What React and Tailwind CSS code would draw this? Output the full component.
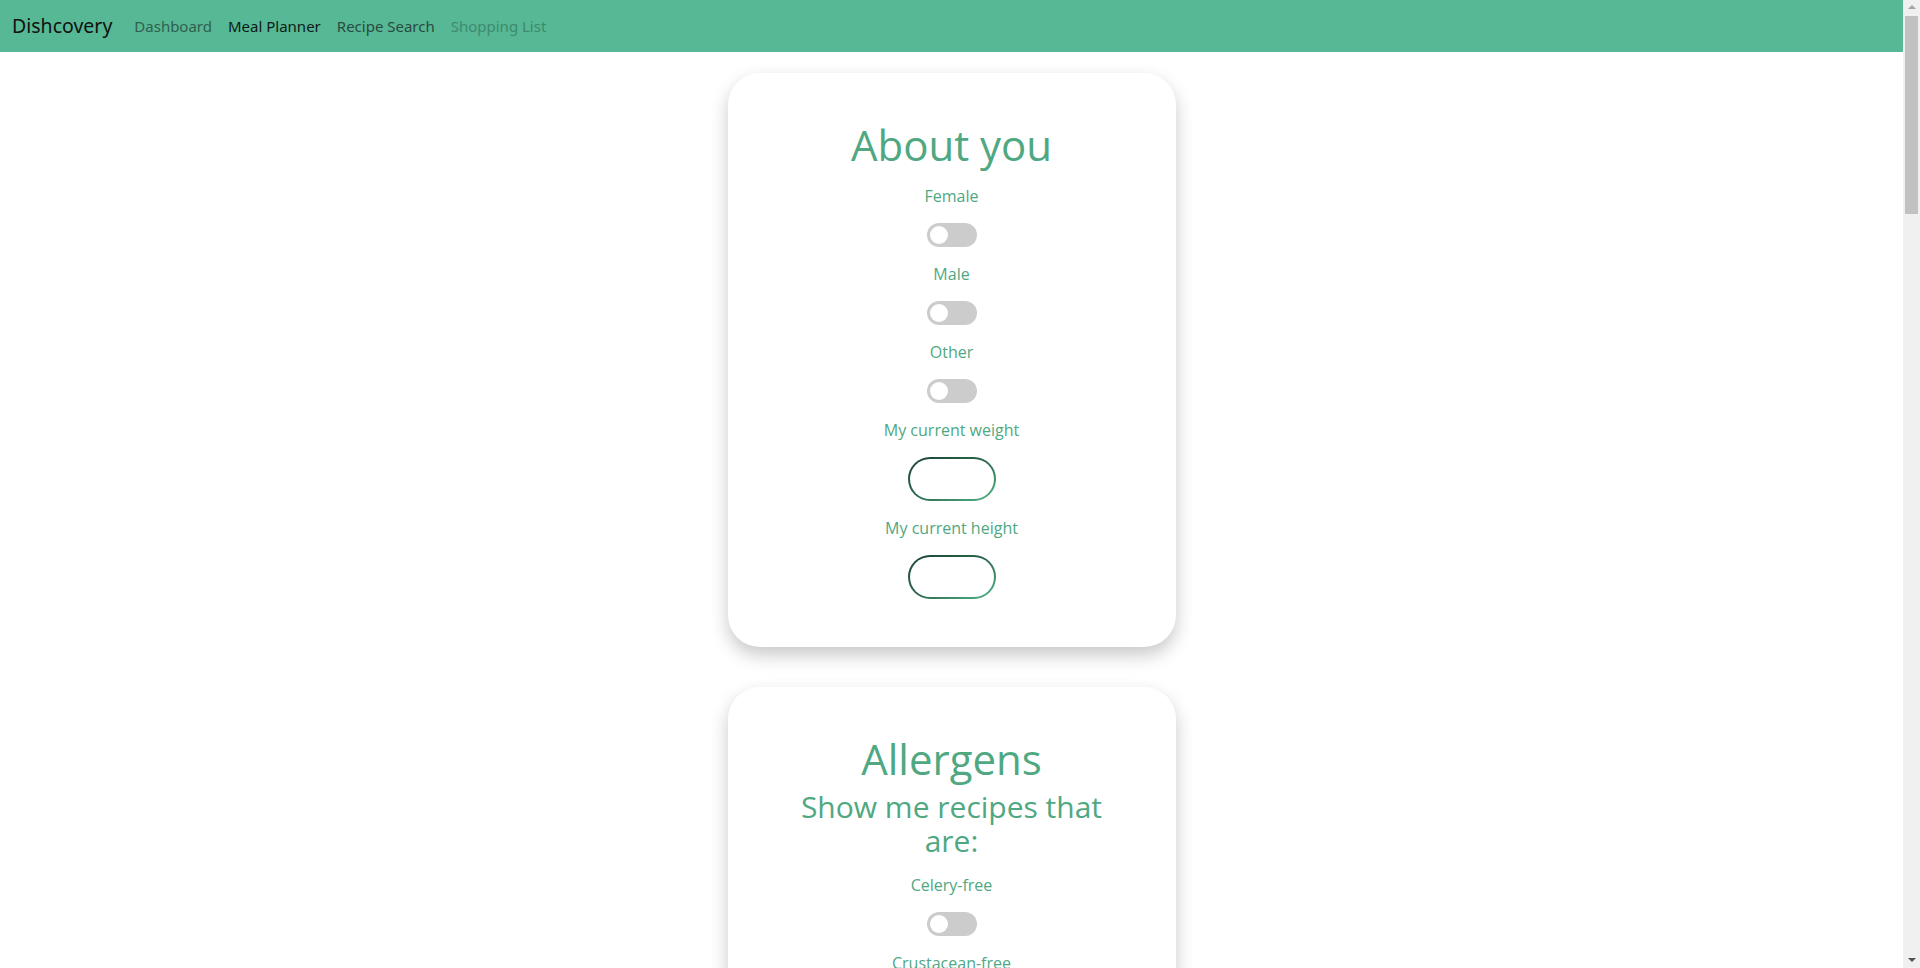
import { useState } from "react";

const cardFont = { fontFamily: '"Open Sans", "Noto Sans", sans-serif' };

function Toggle({ on, onChange }) {
  return (
    <button
      onClick={onChange}
      className={`relative h-6 w-[50px] rounded-full transition ${on ? "bg-[#52b788]" : "bg-[#cccccc]"}`}
    >
      <span
        className={`absolute top-[3px] h-[18px] w-[18px] rounded-full bg-white transition-all ${on ? "left-[29px]" : "left-[3px]"}`}
      />
    </button>
  );
}

function Field({ label, children }) {
  return (
    <>
      <label className="text-[16px] leading-6 text-[#4fa882]">{label}</label>
      {children}
    </>
  );
}

function PillInput() {
  return (
    <div className="rounded-full bg-gradient-to-br from-[#1b4332] via-[#2d6a4f] to-[#52b788] p-[2px]">
      <input className="block h-10 w-[84px] rounded-full bg-white px-3 text-center outline-none" />
    </div>
  );
}

function Card({ children }) {
  return (
    <div
      className="flex w-[448px] shrink-0 flex-col items-center gap-[15px] rounded-[32px] bg-white px-12 py-12 text-center shadow-[0_8px_18px_rgba(0,0,0,0.22)]"
      style={cardFont}
    >
      {children}
    </div>
  );
}

function Scrollbar() {
  return (
    <div className="flex h-full w-[17px] shrink-0 flex-col items-center bg-[#f0f0f0]">
      <div className="mt-[5px] h-0 w-0 border-x-[4px] border-b-[4px] border-x-transparent border-b-[#a3a3a3]" />
      <div className="mt-[7px] h-[198px] w-[13px] bg-[#c1c1c1]" />
      <div className="flex-1" />
      <div className="mb-[6px] h-0 w-0 border-x-[4px] border-t-[4px] border-x-transparent border-t-[#505050]" />
    </div>
  );
}

export default function App() {
  const [sex, setSex] = useState({ female: false, male: false, other: false });
  const [allergens, setAllergens] = useState({ celery: false, crustacean: false });

  return (
    <div className="flex h-screen overflow-hidden bg-white">
      <div className="flex min-w-0 flex-1 flex-col overflow-hidden">
        <nav
          className="flex h-[52px] shrink-0 items-center bg-[#56b894] px-3"
          style={{ fontFamily: '"Noto Sans", "Open Sans", sans-serif' }}
        >
          <span className="mr-[22px] text-[19.5px] text-[#111]">Dishcovery</span>
          <div className="flex gap-4 text-[15px]">
            <a className="text-[#30604e]">Dashboard</a>
            <a className="text-[#0d1a15]">Meal Planner</a>
            <a className="text-[#2b4a3f]">Recipe Search</a>
            <a className="text-[#3f8a6e]">Shopping List</a>
          </div>
        </nav>

        <main className="flex flex-col items-center gap-10 pt-[21px] pb-10">
          <Card>
            <h1 className="text-[42px] leading-[48px] font-medium text-[#4fa882]">About you</h1>
            <Field label="Female">
              <Toggle on={sex.female} onChange={() => setSex((s) => ({ ...s, female: !s.female }))} />
            </Field>
            <Field label="Male">
              <Toggle on={sex.male} onChange={() => setSex((s) => ({ ...s, male: !s.male }))} />
            </Field>
            <Field label="Other">
              <Toggle on={sex.other} onChange={() => setSex((s) => ({ ...s, other: !s.other }))} />
            </Field>
            <Field label="My current weight">
              <PillInput />
            </Field>
            <Field label="My current height">
              <PillInput />
            </Field>
          </Card>

          <Card>
            <h1 className="text-[42px] leading-[48px] font-medium text-[#4fa882]">Allergens</h1>
            <h2 className="-mt-2 w-[330px] text-[30px] leading-[34px] font-medium text-[#4fa882]">
              Show me recipes that are:
            </h2>
            <Field label="Celery-free">
              <Toggle
                on={allergens.celery}
                onChange={() => setAllergens((a) => ({ ...a, celery: !a.celery }))}
              />
            </Field>
            <Field label="Crustacean-free">
              <Toggle
                on={allergens.crustacean}
                onChange={() => setAllergens((a) => ({ ...a, crustacean: !a.crustacean }))}
              />
            </Field>
            <Field label="Egg-free">
              <Toggle on={false} onChange={() => {}} />
            </Field>
          </Card>
        </main>
      </div>
      <Scrollbar />
    </div>
  );
}
